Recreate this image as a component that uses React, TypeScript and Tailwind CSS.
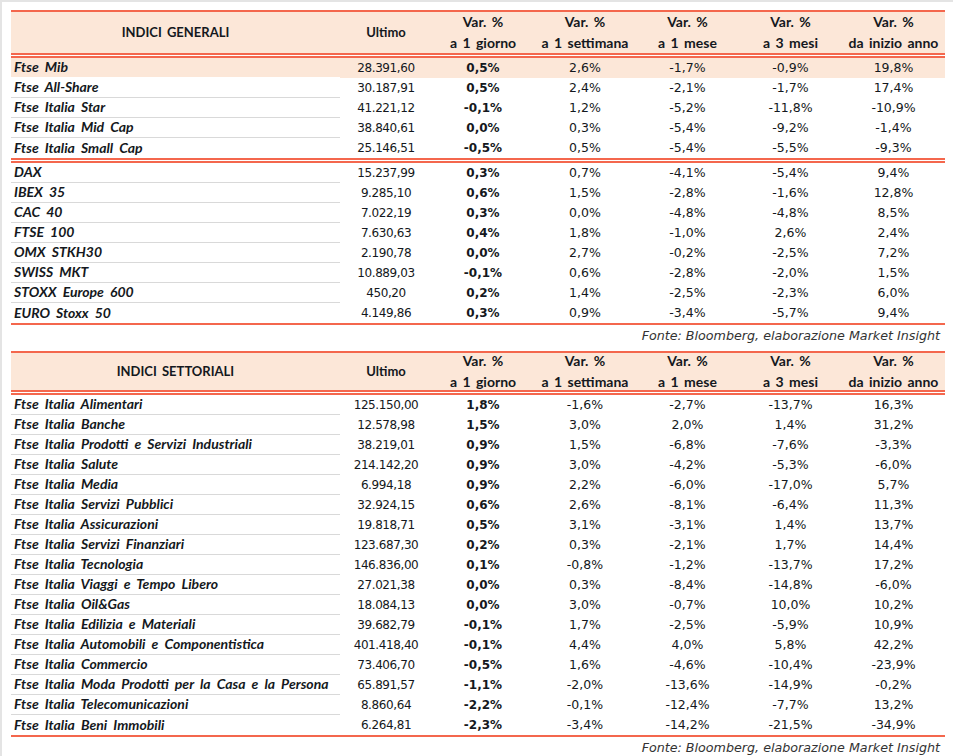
import React from 'react';

type Row = [string, string, string, string, string, string, string];

const generali: Row[] = [
  ['Ftse Mib', '28.391,60', '0,5%', '2,6%', '-1,7%', '-0,9%', '19,8%'],
  ['Ftse All-Share', '30.187,91', '0,5%', '2,4%', '-2,1%', '-1,7%', '17,4%'],
  ['Ftse Italia Star', '41.221,12', '-0,1%', '1,2%', '-5,2%', '-11,8%', '-10,9%'],
  ['Ftse Italia Mid Cap', '38.840,61', '0,0%', '0,3%', '-5,4%', '-9,2%', '-1,4%'],
  ['Ftse Italia Small Cap', '25.146,51', '-0,5%', '0,5%', '-5,4%', '-5,5%', '-9,3%'],
];

const esteri: Row[] = [
  ['DAX', '15.237,99', '0,3%', '0,7%', '-4,1%', '-5,4%', '9,4%'],
  ['IBEX 35', '9.285,10', '0,6%', '1,5%', '-2,8%', '-1,6%', '12,8%'],
  ['CAC 40', '7.022,19', '0,3%', '0,0%', '-4,8%', '-4,8%', '8,5%'],
  ['FTSE 100', '7.630,63', '0,4%', '1,8%', '-1,0%', '2,6%', '2,4%'],
  ['OMX STKH30', '2.190,78', '0,0%', '2,7%', '-0,2%', '-2,5%', '7,2%'],
  ['SWISS MKT', '10.889,03', '-0,1%', '0,6%', '-2,8%', '-2,0%', '1,5%'],
  ['STOXX Europe 600', '450,20', '0,2%', '1,4%', '-2,5%', '-2,3%', '6,0%'],
  ['EURO Stoxx 50', '4.149,86', '0,3%', '0,9%', '-3,4%', '-5,7%', '9,4%'],
];

const settoriali: Row[] = [
  ['Ftse Italia Alimentari', '125.150,00', '1,8%', '-1,6%', '-2,7%', '-13,7%', '16,3%'],
  ['Ftse Italia Banche', '12.578,98', '1,5%', '3,0%', '2,0%', '1,4%', '31,2%'],
  ['Ftse Italia Prodotti e Servizi Industriali', '38.219,01', '0,9%', '1,5%', '-6,8%', '-7,6%', '-3,3%'],
  ['Ftse Italia Salute', '214.142,20', '0,9%', '3,0%', '-4,2%', '-5,3%', '-6,0%'],
  ['Ftse Italia Media', '6.994,18', '0,9%', '2,2%', '-6,0%', '-17,0%', '5,7%'],
  ['Ftse Italia Servizi Pubblici', '32.924,15', '0,6%', '2,6%', '-8,1%', '-6,4%', '11,3%'],
  ['Ftse Italia Assicurazioni', '19.818,71', '0,5%', '3,1%', '-3,1%', '1,4%', '13,7%'],
  ['Ftse Italia Servizi Finanziari', '123.687,30', '0,2%', '0,3%', '-2,1%', '1,7%', '14,4%'],
  ['Ftse Italia Tecnologia', '146.836,00', '0,1%', '-0,8%', '-1,2%', '-13,7%', '17,2%'],
  ['Ftse Italia Viaggi e Tempo Libero', '27.021,38', '0,0%', '0,3%', '-8,4%', '-14,8%', '-6,0%'],
  ['Ftse Italia Oil&Gas', '18.084,13', '0,0%', '3,0%', '-0,7%', '10,0%', '10,2%'],
  ['Ftse Italia Edilizia e Materiali', '39.682,79', '-0,1%', '1,7%', '-2,5%', '-5,9%', '10,9%'],
  ['Ftse Italia Automobili e Componentistica', '401.418,40', '-0,1%', '4,4%', '4,0%', '5,8%', '42,2%'],
  ['Ftse Italia Commercio', '73.406,70', '-0,5%', '1,6%', '-4,6%', '-10,4%', '-23,9%'],
  ['Ftse Italia Moda Prodotti per la Casa e la Persona', '65.891,57', '-1,1%', '-2,0%', '-13,6%', '-14,9%', '-0,2%'],
  ['Ftse Italia Telecomunicazioni', '8.860,64', '-2,2%', '-0,1%', '-12,4%', '-7,7%', '13,2%'],
  ['Ftse Italia Beni Immobili', '6.264,81', '-2,3%', '-3,4%', '-14,2%', '-21,5%', '-34,9%'],
];

const cols = 'grid grid-cols-[329px_92px_102px_102px_103px_103px_103px]';
const boldFont = 'font-["Lato",sans-serif] font-bold';

const Header = ({ title, tall }: { title: string; tall?: boolean }) => (
  <div
    className={`${cols} grid-rows-1 overflow-hidden bg-[#fce7d8] ${boldFont} ${tall ? 'h-[41px]' : 'h-[37px]'}`}
  >
    <div className="flex items-center justify-center text-[13px] leading-none [word-spacing:2px]">{title}</div>
    <div className="flex items-center justify-center text-[13px] leading-none">Ultimo</div>
    {['a 1 giorno', 'a 1 settimana', 'a 1 mese', 'a 3 mesi', 'da inizio anno'].map((s) => (
      <div
        key={s}
        className="flex flex-col items-center justify-center gap-[7px] leading-none whitespace-nowrap text-[14px] [word-spacing:2px]"
      >
        <span>Var. %</span>
        <span>{s}</span>
      </div>
    ))}
  </div>
);

const DoubleRed = () => (
  <div className="flex flex-col gap-px">
    <div className="h-[2px] bg-[#f4674d]" />
    <div className="h-[2px] bg-[#f4674d]" />
  </div>
);

const Rows = ({ rows, highlightFirst }: { rows: Row[]; highlightFirst?: boolean }) => (
  <div>
    {rows.map((r, i) => {
      const last = i === rows.length - 1;
      const hl = highlightFirst && i === 0;
      return (
        <div
          key={r[0]}
          className={`${cols} grid-rows-[20px] h-[20px] leading-none text-[12.5px] whitespace-nowrap ${
            hl ? 'bg-[#fce7d8]' : ''
          }`}
        >
          <div
            className={`flex items-center pl-[3px] pb-px ${boldFont} italic text-[14px] [word-spacing:3px] ${
              last ? '' : hl ? 'border-b border-white' : 'border-b border-[#d9d9d9]'
            }`}
          >
            {r[0]}
          </div>
          <div className="flex items-center justify-center text-[12px] tracking-[-0.4px]">{r[1]}</div>
          <div className="flex items-center justify-center font-bold text-[12px]">{r[2]}</div>
          <div className="flex items-center justify-center">{r[3]}</div>
          <div className="flex items-center justify-center">{r[4]}</div>
          <div className="flex items-center justify-center">{r[5]}</div>
          <div className="flex items-center justify-center">{r[6]}</div>
        </div>
      );
    })}
  </div>
);

const Fonte = () => (
  <div className="h-[22px] flex items-center justify-end pr-[5px] italic text-[12.7px] leading-none text-[#333]">
    Fonte: Bloomberg, elaborazione Market Insight
  </div>
);

export default function App() {
  return (
    <div
      className="w-[953px] h-[756px] bg-white border-t-2 border-l-2 border-[#e4e4e4] text-[#141820] overflow-hidden"
      style={{ fontFamily: '"DejaVu Sans", sans-serif' }}
    >
      <div className="w-[934px] ml-[9px] mt-[8px]">
        <div className="h-[2px] bg-[#f4674d]" />
        <Header title="INDICI GENERALI" tall />
        <DoubleRed />
        <Rows rows={generali} highlightFirst />
        <DoubleRed />
        <Rows rows={esteri} />
        <div className="h-[2px] bg-[#f4674d]" />
        <Fonte />
        <div className="h-[4px]" />
        <div className="h-[2px] bg-[#f4674d]" />
        <Header title="INDICI SETTORIALI" />
        <DoubleRed />
        <Rows rows={settoriali} />
        <div className="h-[2px] bg-[#f4674d]" />
        <Fonte />
      </div>
    </div>
  );
}
